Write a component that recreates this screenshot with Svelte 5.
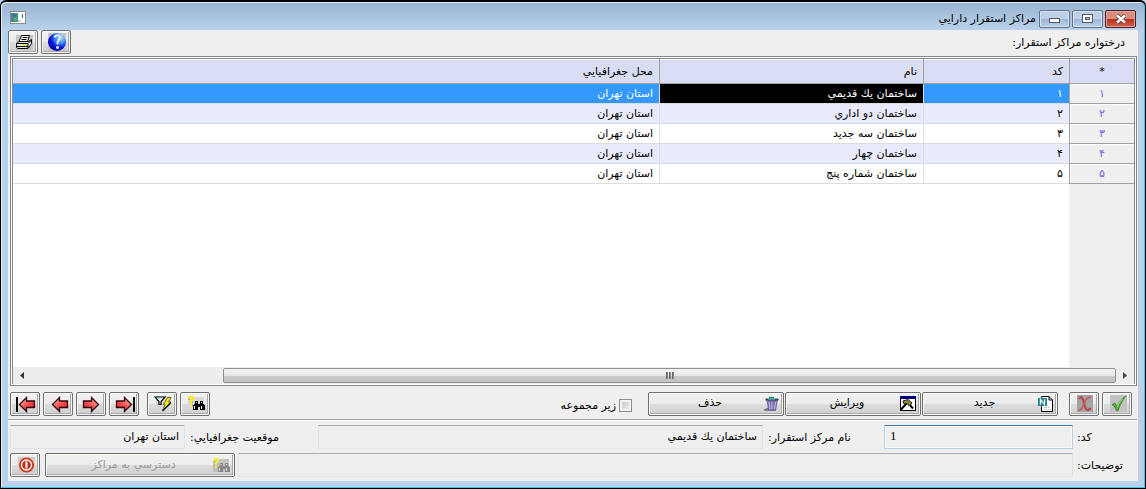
<script>
  const rows = [
    { id: '۱', name: 'ساختمان يك قديمي', place: 'استان تهران' },
    { id: '۲', name: 'ساختمان دو اداري', place: 'استان تهران' },
    { id: '۳', name: 'ساختمان سه جديد', place: 'استان تهران' },
    { id: '۴', name: 'ساختمان چهار', place: 'استان تهران' },
    { id: '۵', name: 'ساختمان شماره پنج', place: 'استان تهران' }
  ];

  let selected = $state(0);
  let code = $state('1');
  let subset = $state(false);

  let current = $derived(rows[selected]);

  function select(i) {
    selected = Math.max(0, Math.min(rows.length - 1, i));
    code = String(selected + 1);
  }
</script>

{#snippet arrow(flip, bar)}
  <svg class="icon" width="20" height="18" viewBox="0 0 20 18">
    <defs>
      <linearGradient id="red" x1="0" y1="0" x2="1" y2="1">
        <stop offset="0" stop-color="#ffc4c4" />
        <stop offset="0.5" stop-color="#ff5555" />
        <stop offset="1" stop-color="#e00014" />
      </linearGradient>
    </defs>
    <g transform={flip ? 'translate(20 0) scale(-1 1)' : ''}>
      {#if bar}
        <rect x="0" y="2" width="2" height="15" />
      {/if}
      <path d="M3.500 9.500 10.500 2.500V6H18.500V12.500H10.500V16.500Z" fill="url(#red)" stroke="#2a0808" stroke-width="1.300" />
    </g>
  </svg>
{/snippet}

{#snippet binoculars(faded)}
  <svg class="icon" class:faded width="17" height="15" viewBox="0 0 17 15" shape-rendering="crispEdges">
    <rect x="0" y="1" width="16" height="13" fill={faded ? '#b9b9b9' : '#d9d9d9'} />
    <path d="M1 0h4v1h1v3h-1v1h-1v2h-2v-3h1v-1h1v-1h-2v1h-2v-2h1zM2 8h2v2h-2z" fill="#f7ee00" />
    <path d="M0 3h2v1h-2zM4 5h1v2h-1zM4 8h1v2h-1z" fill="#a8a8a8" />
    <path d="M7 5h3v3h2v-3h3v3h1v1h1v5h-5v-3h-2v3h-5v-5h1v-1h1z" fill={faded ? '#777' : '#000'} />
    <path d="M8 6h1v1h-1zM13 6h1v1h-1zM6 10h1v3h-1zM13 10h1v3h-1z" fill="#ddd" />
  </svg>
{/snippet}

<div class="window" dir="rtl">
  <header class="titlebar">
    <div class="caption-buttons">
      <button class="caption close" aria-label="Close">
        <svg width="12" height="10" viewBox="0 0 12 10">
          <path d="M2 1.500 10 8.500M10 1.500 2 8.500" stroke="#64343a" stroke-width="4" />
          <path d="M2 1.500 10 8.500M10 1.500 2 8.500" stroke="#fff" stroke-width="2.400" />
        </svg>
      </button>
      <button class="caption" aria-label="Maximize">
        <svg width="11" height="9" viewBox="0 0 11 9" shape-rendering="crispEdges">
          <rect x="0" y="0" width="11" height="9" fill="#535666" />
          <rect x="1" y="1" width="9" height="7" fill="#fff" />
          <rect x="3" y="3" width="5" height="3" fill="#535666" />
          <rect x="4" y="4" width="3" height="1" fill="#a9c3e0" />
        </svg>
      </button>
      <button class="caption" aria-label="Minimize">
        <svg class="low" width="11" height="5" viewBox="0 0 11 5" shape-rendering="crispEdges">
          <rect x="0" y="0" width="11" height="5" fill="#535666" />
          <rect x="1" y="1" width="9" height="3" fill="#fff" />
        </svg>
      </button>
    </div>
    <h1>مراكز استقرار دارايي</h1>
    <svg class="app-icon" width="16" height="13" viewBox="0 0 16 13" shape-rendering="crispEdges">
      <rect width="16" height="13" fill="#8b8b8b" />
      <rect x="1" y="1" width="14" height="11" fill="#fff" />
      <rect x="1" y="2" width="7" height="9" fill="#3f8f86" />
      <rect x="2" y="3" width="4" height="3" fill="#4a72a0" />
      <rect x="4" y="6" width="3" height="4" fill="#4faa74" />
      <rect x="12" y="3" width="1" height="4" fill="#3567a8" />
      <rect x="8" y="9" width="3" height="2" fill="#d5d5d5" />
    </svg>
  </header>

  <main>
    <div class="toolbar">
      <span>درختواره مراكز استقرار:</span>
      <div class="group">
        <button class="tool" aria-label="Help">
          <svg class="icon" width="18" height="18" viewBox="0 0 18 18">
            <defs>
              <radialGradient id="ball" cx="0.700" cy="0.250" r="0.800">
                <stop offset="0" stop-color="#b9e4ff" />
                <stop offset="0.450" stop-color="#3478ee" />
                <stop offset="0.700" stop-color="#0712e0" />
                <stop offset="1" stop-color="#0000a8" />
              </radialGradient>
            </defs>
            <rect width="18" height="18" fill="#c6c6c6" />
            <circle cx="9" cy="9" r="9" fill="url(#ball)" />
            <path d="M6.500 4.500C7.500 1.500 12.500 1.500 12 5C11.500 7.500 8.500 8 9.500 11.500" fill="none" stroke="#d5ecff" stroke-width="2" />
            <circle cx="9.500" cy="14.500" r="1.500" fill="#fff" />
          </svg>
        </button>
        <button class="tool" aria-label="Print">
          <svg class="icon" width="17" height="15" viewBox="0 0 17 15">
            <rect width="17" height="15" fill="#c6c6c6" />
            <path d="M5.500 0.500H13.500L11.500 6.500H3Z" fill="#fff" stroke="#000" />
            <path d="M6.500 2.500H11.500M5.500 4.500H10.500" stroke="#000" />
            <path d="M0.500 8.500 3 6.500H12.500L15.500 4.500V8.500L12 13.500H1.500L0.500 12Z" fill="#e6e6e6" stroke="#000" />
            <path d="M1 8.500H12V13M12.500 8 15.500 5M1 11.500H12" fill="none" stroke="#000" />
            <path d="M7 10H11" stroke="#f2ea00" stroke-width="1.400" />
          </svg>
        </button>
      </div>
    </div>

    <div class="grid">
      <div class="viewport">
        <table>
          <colgroup>
            <col class="col-index" />
            <col class="col-code" />
            <col class="col-name" />
            <col />
          </colgroup>
          <thead>
            <tr>
              <th class="index">*</th>
              <th>كد</th>
              <th>نام</th>
              <th>محل جغرافيايي</th>
            </tr>
          </thead>
          <tbody>
            {#each rows as row, i}
              <tr class:selected={i === selected} onclick={() => select(i)}>
                <td class="index">{row.id}</td>
                <td>{row.id}</td>
                <td class="name">{row.name}</td>
                <td>{row.place}</td>
              </tr>
            {/each}
          </tbody>
        </table>
        <div class="rest"></div>
      </div>
      <div class="scrollbar">
        <button aria-label="Scroll right">
          <svg width="4" height="7" viewBox="0 0 4 7"><path d="M0 0 4 3.500 0 7Z" fill="#444" /></svg>
        </button>
        <div class="track">
          <div class="thumb"><i></i><i></i><i></i></div>
        </div>
        <button aria-label="Scroll left">
          <svg width="4" height="7" viewBox="0 0 4 7"><path d="M4 0 0 3.500 4 7Z" fill="#333" /></svg>
        </button>
      </div>
    </div>

    <div class="actions">
      <div class="group confirm">
        <button class="tool" aria-label="Save">
          <svg class="icon" width="17" height="17" viewBox="0 0 17 17">
            <rect width="17" height="17" fill="#c3c3c3" />
            <path d="M2 9.500 5 8 7 11.500C9 7 12 3 16 1C12 6 10 10 8 16H6.500C5.500 13 4 11 2 9.500Z" fill="#43b02a" stroke="#3b6b35" stroke-width="0.600" />
            <path d="M7 12.500C9 8 11 5 13 3.500" fill="none" stroke="#9be77e" />
          </svg>
        </button>
        <button class="tool" aria-label="Cancel">
          <svg class="icon" width="16" height="17" viewBox="0 0 16 17">
            <rect width="16" height="17" fill="#a3a3a3" />
            <path d="M2 4C4 0 6 3 7 8C8 14 10 17 14 13" fill="none" stroke="#bb4b50" stroke-width="2.200" />
            <path d="M14 2C10 2 8 6 7 9C5 14 4 15 1.500 15.500" fill="none" stroke="#c9565b" stroke-width="1.600" />
          </svg>
        </button>
      </div>
      <div class="group records">
        <button class="wide">
          <svg class="icon" width="15" height="16" viewBox="0 0 15 16">
            <path d="M3.500 0.500H11L14.500 4V15.500H3.500Z" fill="#fff" stroke="#000" />
            <path d="M11 0.500V4H14.500" fill="none" stroke="#000" />
            <path d="M6 11.500H12M6 13.500H13" stroke="#b9b9b9" stroke-dasharray="1 1" />
            <rect x="0" y="2" width="9" height="8" fill="#2b8790" />
            <path d="M2.500 8.500V3.500L6.500 8.500V3.500" fill="none" stroke="#fff" stroke-width="1.200" />
          </svg>
          <span>جديد</span>
        </button>
        <button class="wide">
          <svg class="icon" width="16" height="15" viewBox="0 0 16 15">
            <rect x="0.500" y="0.500" width="15" height="14" fill="#fff" stroke="#000" />
            <rect x="0" y="0" width="16" height="3" fill="#000080" />
            <path d="M8 7 13 12.500M7 7 1 13.500" stroke="#000" stroke-width="2" />
            <path d="M3 5 8 3.500 12 7 9.500 10 7 7.500 4 8Z" fill="#8c8a2c" stroke="#222" />
          </svg>
          <span>ويرايش</span>
        </button>
        <button class="wide">
          <svg class="icon" width="16" height="17" viewBox="0 0 16 17">
            <path d="M0 15 6 12 12 16H3Z" fill="#777" />
            <path d="M5 1H12L13 5H4Z" fill="#e9fff5" />
            <path d="M6 2.500H11" stroke="#14856d" stroke-width="1.400" />
            <path d="M3 4H15L13 16H5.500Z" fill="#746fa8" />
            <path d="M2.500 4.500H15.500" stroke="#403d64" stroke-width="2" />
            <path d="M6 7 7 14M9 7V14M12.500 7 11.500 14" stroke="#c5c2e6" />
            <path d="M5 4.500H12" stroke="#2c9b86" />
          </svg>
          <span>حذف</span>
        </button>
      </div>
      <label class="check">
        <input type="checkbox" bind:checked={subset} />
        <span>زير مجموعه</span>
      </label>
      <div class="group nav">
        <button class="tool" aria-label="Find">{@render binoculars(false)}</button>
        <button class="tool" aria-label="Filter">
          <svg class="icon" width="18" height="16" viewBox="0 0 18 16">
            <rect x="2" y="0" width="15" height="15" fill="#d6d6d6" />
            <path d="M1 1H11L7 5.500V8.500H5V5.500Z" fill="#fff" stroke="#000" stroke-width="1.200" />
            <path d="M4 2H7" stroke="#2fb6c0" />
            <path d="M13.500 1.500H17L14.500 6H17L8.500 14.500 11 9H9.500Z" fill="#f5e800" stroke="#000" stroke-width="0.500" />
            <path d="M17 6.500 8.500 15" stroke="#000" stroke-width="1.200" />
          </svg>
        </button>
      </div>
      <div class="group">
        <button class="tool" aria-label="Last" onclick={() => select(rows.length - 1)}>{@render arrow(true, true)}</button>
        <button class="tool" aria-label="Next" onclick={() => select(selected + 1)}>{@render arrow(true, false)}</button>
        <button class="tool" aria-label="Previous" onclick={() => select(selected - 1)}>{@render arrow(false, false)}</button>
        <button class="tool" aria-label="First" onclick={() => select(0)}>{@render arrow(false, true)}</button>
      </div>
    </div>

    <div class="form">
      <label class="lead" for="code">كد:</label>
      <input id="code" class="field code" dir="ltr" type="text" bind:value={code} />
      <label class="name-label" for="center">نام مركز استقرار:</label>
      <input id="center" class="field center" type="text" readonly value={current.name} />
      <label class="place-label" for="place">موقعيت جغرافيايي:</label>
      <input id="place" class="field place" type="text" readonly value={current.place} />
    </div>

    <div class="form">
      <label class="lead" for="notes">توضيحات:</label>
      <input id="notes" class="field notes" type="text" readonly />
      <button class="wide access" disabled>
        {@render binoculars(true)}
        <span>دسترسي به مراكز</span>
      </button>
      <button class="tool" aria-label="Exit">
        <svg class="icon" width="17" height="16" viewBox="0 0 17 16">
          <rect width="17" height="16" fill="#d2cdca" />
          <circle cx="8.500" cy="8" r="7.500" fill="#d0391d" />
          <circle cx="8.500" cy="8" r="5" fill="#c02d15" stroke="#fff" stroke-width="1.300" />
          <path d="M8.500 4.500V11.500" stroke="#fff" stroke-width="2" />
        </svg>
      </button>
    </div>
  </main>
</div>

<style>
  :global(body) {
    background: #b9d1ea;
  }

  .window,
  .window button,
  .window input {
    font-family: "DejaVu Sans", sans-serif;
    font-size: 11px;
    color: #000;
  }

  .window {
    box-sizing: border-box;
    min-height: 100vh;
    display: flex;
    flex-direction: column;
    padding: 0 7px 7px;
    border: 1px solid #000;
    border-top-width: 2px;
    border-radius: 6px 6px 0 0;
    box-shadow: inset -1px -1px 0 #35c6e4, inset 1px 1px 0 #e4eef8;
    background: linear-gradient(#98b3d1, #b9d1ea 28px);
  }

  .titlebar {
    display: flex;
    align-items: center;
    height: 28px;
    padding: 0 2px;
    box-sizing: border-box;
  }

  .titlebar h1 {
    flex: 1;
    margin: 5px 3px 0;
    font-size: 11px;
    font-weight: normal;
  }

  .caption-buttons {
    display: flex;
    gap: 2px;
    padding-top: 5px;
  }

  .caption {
    display: flex;
    align-items: center;
    justify-content: center;
    width: 31px;
    height: 18px;
    padding: 0;
    border: 1px solid #61728a;
    border-radius: 2px;
    box-shadow: inset 0 0 0 1px #d3e1f0;
    background: linear-gradient(#bdd0e5 50%, #9bb6d4 50%, #b9d0e8);
  }

  .caption.close {
    border-color: #4e1c22;
    box-shadow: inset 0 0 0 1px #e0a498;
    background: linear-gradient(#d98b7c 50%, #b8311c 50%, #d0604c);
  }

  .low {
    margin-top: 4px;
  }

  .app-icon {
    margin-top: 3px;
  }

  main {
    flex: 1;
    display: flex;
    flex-direction: column;
    background: #efefef;
  }

  .toolbar {
    display: flex;
    justify-content: space-between;
    align-items: center;
    height: 24px;
    padding-right: 13px;
    margin-bottom: 2px;
  }

  .group {
    display: flex;
    gap: 3px;
  }

  .group.records {
    gap: 1px;
  }

  .tool,
  .wide {
    box-sizing: border-box;
    height: 24px;
    padding: 0;
    border: 1px solid #707070;
    border-radius: 2px;
    box-shadow: inset 0 0 0 1px #f8f8f8, inset -1px -1px 0 1px #a8a8a8;
    background: linear-gradient(#f1f1f1, #ebebeb 50%, #dddddd 50%, #cfcfcf);
  }

  .tool {
    display: flex;
    align-items: center;
    justify-content: center;
    width: 30px;
    padding-left: 2px;
  }

  .wide {
    display: flex;
    align-items: center;
    width: 136px;
    padding: 0 4px;
  }

  .wide span {
    flex: 1;
    text-align: center;
    padding: 0 0 2px 4px;
  }

  .icon {
    flex: none;
    display: block;
  }

  .grid {
    flex: 1;
    display: flex;
    flex-direction: column;
    margin: 0 1px 0 2px;
    border: 1px solid #828790;
    box-shadow: inset 0 0 0 1px #fff, inset 0 0 0 2px #8a8a8a;
    padding: 2px 2px 1px;
    background: #efefef;
  }

  .viewport {
    flex: 1;
    display: flex;
    flex-direction: column;
    background: #fff;
  }

  table {
    width: 100%;
    table-layout: fixed;
    border-collapse: separate;
    border-spacing: 0;
  }

  .col-index {
    width: 65px;
  }

  .col-code {
    width: 146px;
  }

  .col-name {
    width: 264px;
  }

  th,
  td {
    box-sizing: border-box;
    padding: 0 6px;
    font-weight: normal;
    text-align: right;
    white-space: nowrap;
    overflow: hidden;
  }

  th {
    height: 25px;
    background: #d8ddf3;
    border-bottom: 1px solid #a0a0a0;
    border-left: 1px solid #a0a0a0;
    box-shadow: inset 0 1px 0 #fff;
  }

  td {
    height: 20px;
    line-height: 18px;
    border-bottom: 1px solid #dcdcdc;
    border-left: 1px solid #dcdcdc;
  }

  th:last-child,
  td:last-child {
    border-left: none;
  }

  tbody tr:nth-child(even) {
    background: #eaeaff;
  }

  tbody tr.selected {
    background: #3399ff;
    color: #fff;
  }

  .selected .name {
    background: #000;
  }

  .index {
    text-align: center;
  }

  td.index {
    color: #6a6af0;
    background: #efefef;
    border-color: #a0a0a0;
    box-shadow: inset 1px 1px 0 #fff;
  }

  .rest {
    flex: 1;
    width: 65px;
    background: #efefef;
  }

  .scrollbar {
    display: flex;
    height: 17px;
    background: #ededed;
  }

  .scrollbar button {
    display: flex;
    align-items: center;
    justify-content: center;
    width: 18px;
    padding: 0;
    border: none;
    background: none;
  }

  .track {
    flex: 1;
    display: flex;
    padding: 1px 0;
  }

  .thumb {
    display: flex;
    align-items: center;
    justify-content: center;
    gap: 1px;
    width: 82.3%;
    box-sizing: border-box;
    border: 1px solid #8f8f8f;
    border-radius: 2px;
    background: linear-gradient(#f3f3f3, #e6e6e6 50%, #cacaca 50%, #c2c2c2);
  }

  .thumb i {
    width: 2px;
    height: 7px;
    background: linear-gradient(90deg, #555, #999);
  }

  .actions {
    display: flex;
    align-items: center;
    height: 34px;
    padding: 2px 5px 0 2px;
    margin-right: 1px;
    box-sizing: border-box;
    border-bottom: 1px solid #a0a0a0;
    box-shadow: 0 1px 0 #fff;
    margin-bottom: 5px;
  }

  .confirm {
    margin-left: 11px;
  }

  .check {
    display: flex;
    align-items: center;
    gap: 3px;
    margin: 4px 16px 0 auto;
  }

  .check input {
    appearance: none;
    width: 13px;
    height: 13px;
    margin: 0;
    border: 1px solid #8e8f8f;
    box-shadow: inset 0 0 0 2px #f4f4f4;
    background: linear-gradient(135deg, #bcc2ca, #f6f6f6);
  }

  .check input:checked {
    background: #4b6097;
  }

  .nav {
    margin-left: 8px;
  }

  .form {
    display: flex;
    align-items: center;
    height: 24px;
    padding: 0 0 0 2px;
    margin-bottom: 4px;
  }

  .lead {
    width: 61px;
    margin-left: 4px;
    text-align: left;
  }

  .field {
    box-sizing: border-box;
    min-width: 0;
    height: 24px;
    padding: 0 5px 2px;
    border: 1px solid #e2e3ea;
    border-top-color: #abadb3;
    border-radius: 1px;
    outline: none;
    background: #efefef;
  }

  .window .code {
    width: 189px;
    font-family: "Liberation Serif", serif;
    font-size: 13px;
    border-color: #b5cfe7;
    border-top-color: #3d7bad;
    box-shadow: inset 0 0 0 1px #f5f9fc;
  }

  .name-label {
    width: 116px;
    text-align: left;
    margin-left: 5px;
  }

  .center {
    flex: 433;
  }

  .place-label {
    width: 128px;
    text-align: left;
    margin-left: 5px;
  }

  .place {
    flex: 163;
  }

  .notes {
    flex: 1;
  }

  .access {
    width: 190px;
    margin: 0 3px 0 5px;
  }

  .access:disabled {
    color: #999;
  }

  .faded {
    opacity: 0.8;
  }
</style>
